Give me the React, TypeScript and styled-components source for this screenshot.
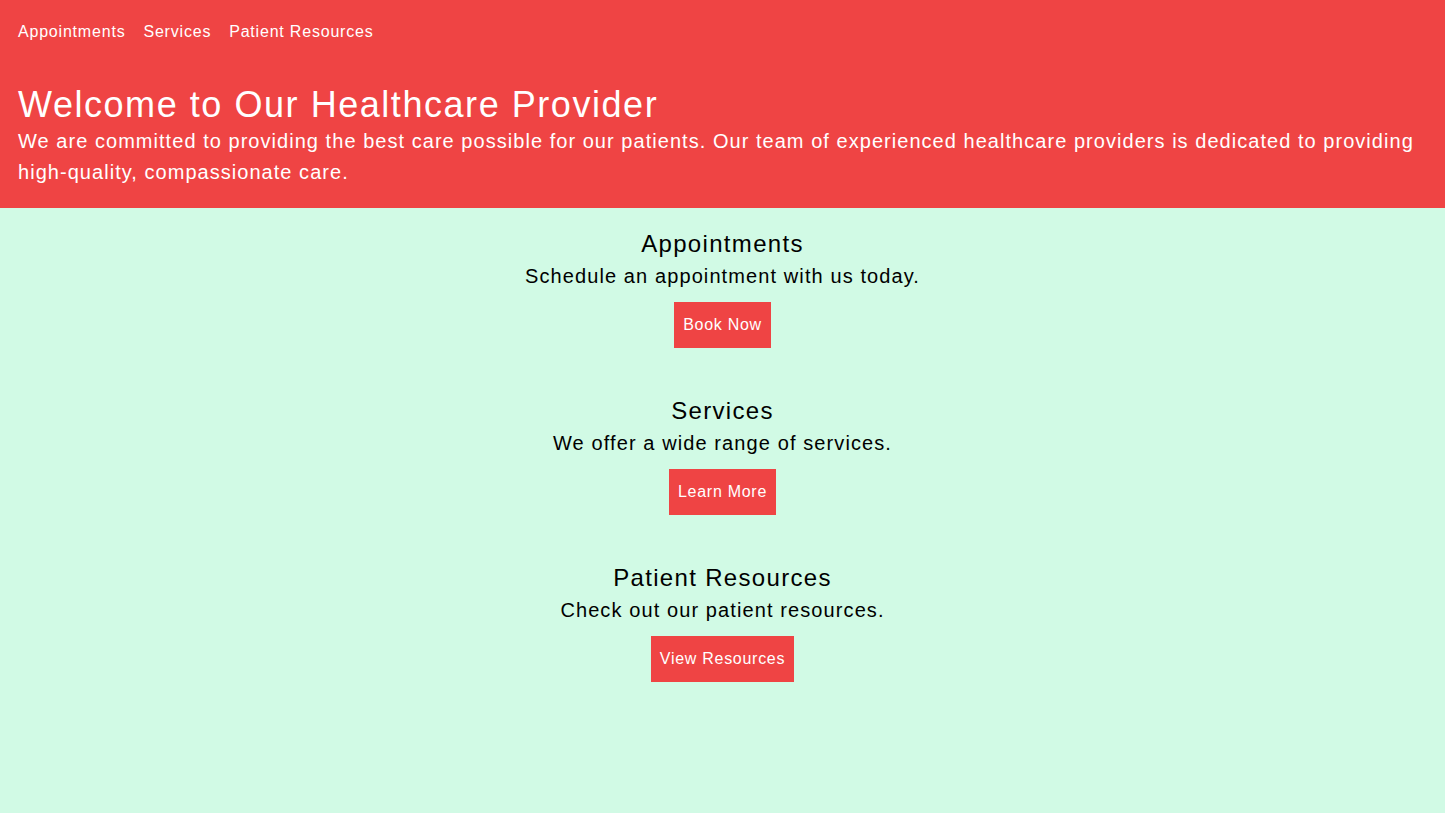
import React from "react";
import styled, { createGlobalStyle } from "styled-components";

const Global = createGlobalStyle`
  html, body { margin: 0; padding: 0; }
  body {
    font-family: "Liberation Sans", Arial, sans-serif;
    letter-spacing: 0.05em;
    background: #d1fae5;
  }
  #root { min-height: 100vh; }
`;

const Page = styled.div`
  min-height: 100vh;
  background: #d1fae5;
  color: #000;
`;

const Header = styled.header`
  background: #ef4444;
  color: #fff;
  padding: 20px 18px 20px;
`;

const Nav = styled.nav`
  display: flex;
  gap: 18px;
  font-size: 16px;
  line-height: 24px;
`;

const NavLink = styled.a`
  color: #fff;
  text-decoration: none;
`;

const Title = styled.h1`
  margin: 41px 0 0;
  font-size: 36px;
  line-height: 40px;
  font-weight: 400;
  letter-spacing: 0.043em;
`;

const Lead = styled.p`
  margin: 0;
  padding-top: 1px;
  font-size: 20px;
  line-height: 31px;
  letter-spacing: 0.052em;
`;

const Main = styled.main`
  display: flex;
  flex-direction: column;
  align-items: center;
  gap: 47px;
  padding-top: 20px;
`;

const Section = styled.section`
  display: flex;
  flex-direction: column;
  align-items: center;
  text-align: center;
`;

const Heading = styled.h2`
  margin: 0;
  font-size: 24px;
  line-height: 32px;
  font-weight: 400;
  letter-spacing: 0.055em;
`;

const Text = styled.p`
  margin: 0;
  font-size: 20px;
  line-height: 32px;
  letter-spacing: 0.055em;
`;

const Button = styled.a`
  margin-top: 10px;
  background: #ef4444;
  color: #fff;
  font-size: 16px;
  line-height: 24px;
  padding: 11px 9px;
  letter-spacing: 0.045em;
  text-decoration: none;
`;

const sections = [
  { title: "Appointments", text: "Schedule an appointment with us today.", cta: "Book Now" },
  { title: "Services", text: "We offer a wide range of services.", cta: "Learn More" },
  { title: "Patient Resources", text: "Check out our patient resources.", cta: "View Resources" },
];

export default function App() {
  return (
    <Page>
      <Global />
      <Header>
        <Nav>
          <NavLink href="#">Appointments</NavLink>
          <NavLink href="#">Services</NavLink>
          <NavLink href="#">Patient Resources</NavLink>
        </Nav>
        <Title>Welcome to Our Healthcare Provider</Title>
        <Lead>
          We are committed to providing the best care possible for our patients. Our team of experienced
          healthcare providers is dedicated to providing high-quality, compassionate care.
        </Lead>
      </Header>
      <Main>
        {sections.map((s) => (
          <Section key={s.title}>
            <Heading>{s.title}</Heading>
            <Text>{s.text}</Text>
            <Button href="#">{s.cta}</Button>
          </Section>
        ))}
      </Main>
    </Page>
  );
}
